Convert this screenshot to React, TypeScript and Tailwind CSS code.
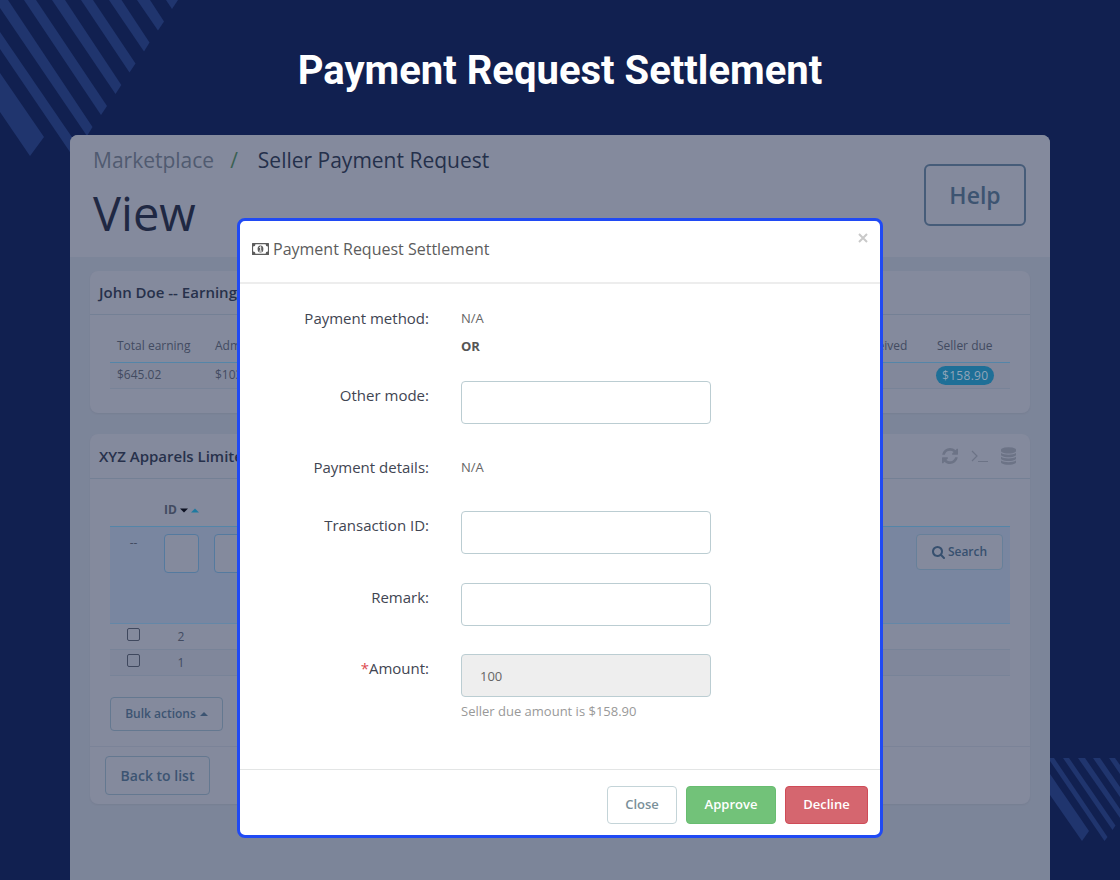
import type { ReactNode } from "react";

interface FormRowProps {
  label: string;
  htmlFor?: string;
  required?: boolean;
  className: string;
  children: ReactNode;
}

const earnings = [
  { label: "Total earning", value: "$645.02", width: "w-[98px]" },
  { label: "Admin commission", value: "$103.20", width: "w-[115px]" },
  { label: "Seller earning", value: "$541.82", width: "" },
  { label: "Seller received", value: "$382.92", width: "w-[109px]" },
];

const requests = [
  { id: 2, row: "" },
  { id: 1, row: "bg-[#80879b]" },
];

function RefreshIcon() {
  return (
    <svg viewBox="0 0 1536 1536" className="h-4 w-4" fill="currentColor" aria-hidden="true">
      <path d="M1511 928q0 5-1 7-64 268-268 434.500t-478 166.500q-146 0-282.500-55t-243.500-157l-129 129q-19 19-45 19t-45-19-19-45v-448q0-26 19-45t45-19h448q26 0 45 19t19 45-19 45l-137 137q71 66 161 102t187 36q134 0 250-65t186-179q11-17 53-117 8-23 30-23h192q13 0 22.500 9.500t9.500 22.500zM1536 128v448q0 26-19 45t-45 19h-448q-26 0-45-19t-19-45 19-45l138-138q-148-137-349-137-134 0-250 65t-186 179q-11 17-53 117-8 23-30 23h-199q-13 0-22.500-9.500t-9.500-22.500v-7q65-268 270-434.500t480-166.500q146 0 284 55.500t245 156.500l130-129q19-19 45-19t45 19 19 45z" />
    </svg>
  );
}

function TerminalIcon() {
  return (
    <svg viewBox="0 0 17 14" className="h-[14px] w-[17px]" fill="none" stroke="currentColor" aria-hidden="true">
      <path d="M1 2l5 5-5 5M7 12.500h10" strokeWidth="1.200" />
    </svg>
  );
}

function DatabaseIcon() {
  return (
    <svg viewBox="0 0 1536 1792" className="h-[18px] w-[15px]" fill="currentColor" aria-hidden="true">
      <path d="M768 768q237 0 443-43t325-127v170q0 69-103 128t-280 93.500-385 34.500-385-34.500-280-93.500-103-128v-170q119 84 325 127t443 43zm0 768q237 0 443-43t325-127v170q0 69-103 128t-280 93.500-385 34.500-385-34.500-280-93.500-103-128v-170q119 84 325 127t443 43zm0-384q237 0 443-43t325-127v170q0 69-103 128t-280 93.500-385 34.500-385-34.500-280-93.500-103-128v-170q119 84 325 127t443 43zm0-1152q208 0 385 34.500t280 93.500 103 128v128q0 69-103 128t-280 93.500-385 34.500-385-34.500-280-93.500-103-128v-128q0-69 103-128t280-93.500 385-34.500z" />
    </svg>
  );
}

function SearchIcon() {
  return (
    <svg viewBox="0 0 1664 1664" className="h-[13px] w-[13px]" fill="currentColor" aria-hidden="true">
      <path d="M1152 704q0-185-131.500-316.500t-316.500-131.500-316.500 131.500-131.500 316.500 131.500 316.500 316.500 131.500 316.500-131.500 131.500-316.500zm512 832q0 52-38 90t-90 38q-54 0-90-38l-343-342q-179 124-399 124-143 0-273.500-55.500t-225-150-150-225-55.500-273.500 55.500-273.500 150-225 225-150 273.500-55.500 273.500 55.500 225 150 150 225 55.500 273.500q0 220-124 399l343 343q37 37 37 90z" />
    </svg>
  );
}

function MoneyIcon() {
  return (
    <svg viewBox="0 0 17 12" className="h-3 w-[17px]" aria-hidden="true">
      <path
        fill="currentColor"
        fillRule="evenodd"
        d="M.6 0h15.800a.6.6 0 0 1 .6.6v10.800a.6.6 0 0 1-.6.600H.6a.6.6 0 0 1-.6-.6V.6A.6.6 0 0 1 .6 0zM3.400 1.200a2.300 2.300 0 0 1-2.300 2.300v5a2.300 2.300 0 0 1 2.300 2.300h10.200a2.300 2.300 0 0 1 2.300-2.300v-5a2.300 2.300 0 0 1-2.300-2.300z"
      />
      <ellipse cx="8.500" cy="6" rx="2.900" ry="3.600" fill="currentColor" />
      <path d="M7.300 4.600l1.400-1v4M7.200 8.100h2.700" fill="none" stroke="#fff" strokeWidth="1" />
    </svg>
  );
}

function Caret({ down = false, className }: { down?: boolean; className?: string }) {
  return (
    <svg viewBox="0 0 8 4" className={className ?? "h-1 w-2"} fill="currentColor" aria-hidden="true">
      <path d={down ? "M0 0h8L4 4z" : "M0 4h8L4 0z"} />
    </svg>
  );
}

function Stripes() {
  return (
    <>
      <svg viewBox="0 0 180 160" className="absolute left-0 top-0 h-40 w-[180px]" fill="#20356e" aria-hidden="true">
        <path d="M0 73L44 137L30 156L0 112z" />
        <path d="M0 32L78 146L72 155L0 49z" />
        <path d="M0 0H8L92.500 127L87 136L0 8z" />
        <path d="M24 0H36L107 106L101 115z" />
        <path d="M52 0H65L121.300 85L115.500 94z" />
        <path d="M81 0H93L135.500 63.500L129.500 72.500z" />
        <path d="M109 0H121.500L149.500 42.500L144 51.500z" />
        <path d="M137 0H150L164 21.500L158 30.500z" />
        <path d="M166 0H178L172 9z" />
      </svg>
      <svg viewBox="0 0 70 90" className="absolute right-0 top-[758px] h-[90px] w-[70px]" fill="#20356e" aria-hidden="true">
        <path d="M0 16L39 73L32 83L0 37z" />
        <path d="M0 0H4L57.500 79L54.500 83L0 3z" />
        <path d="M13 0H19L65.500 67.500L62.500 72z" />
        <path d="M28 0H35L70 51V60z" />
        <path d="M43 0H50L70 29V39z" />
        <path d="M59 0H65L70 7V16z" />
      </svg>
    </>
  );
}

function FormRow({ label, htmlFor, required = false, className, children }: FormRowProps) {
  return (
    <div className={`grid grid-cols-[189px_1fr] gap-x-8 ${className}`}>
      <label htmlFor={htmlFor} className="pt-1 text-right text-[15px] leading-5 text-[#414552]">
        {required && <span className="text-[#dc4a50]">*</span>}
        {label}:
      </label>
      <div className="pt-1 text-[13px] leading-5 text-[#666]">{children}</div>
    </div>
  );
}

function TextField({ id }: { id: string }) {
  return <input id={id} type="text" className="block h-[43px] w-[250px] rounded border border-[#bbcdd2] bg-white px-[18px]" />;
}

function SettlementModal() {
  return (
    <div
      role="dialog"
      aria-labelledby="settlement-title"
      className="absolute inset-x-0 top-[83px] mx-auto w-[646px] rounded-lg border-[3px] border-[#204af4] bg-white"
    >
      <header className="flex h-[63px] items-start justify-between border-b-2 border-[#ededed] pl-3 pr-3">
        <h2 id="settlement-title" className="flex items-center gap-1 pt-4 text-base leading-6 text-[#5c5c5c]">
          <MoneyIcon />
          Payment Request Settlement
        </h2>
        <button type="button" aria-label="Close dialog" className="pt-3 text-[#c9c9c9]">
          <svg viewBox="0 0 10 10" className="h-[10px] w-[10px]" stroke="currentColor" strokeWidth="2" aria-hidden="true">
            <path d="M1 1l8 8M9 1L1 9" />
          </svg>
        </button>
      </header>

      <form>
        <div className="h-[485px] pt-5">
          <FormRow label="Payment method" className="h-[77px]">
            <p>N/A</p>
            <p className="pt-2 font-bold text-[#555]">OR</p>
          </FormRow>
          <FormRow label="Other mode" htmlFor="other-mode" className="h-[72px]">
            <div className="-mt-4 pt-3">
              <TextField id="other-mode" />
            </div>
          </FormRow>
          <FormRow label="Payment details" className="h-[58px]">
            <p>N/A</p>
          </FormRow>
          <FormRow label="Transaction ID" htmlFor="transaction-id" className="h-[72px]">
            <div className="-mt-4 pt-3">
              <TextField id="transaction-id" />
            </div>
          </FormRow>
          <FormRow label="Remark" htmlFor="remark" className="h-[71px]">
            <div className="-mt-4 pt-3">
              <TextField id="remark" />
            </div>
          </FormRow>
          <FormRow label="Amount" htmlFor="amount" required className="h-20">
            <div className="-mt-4 pt-3">
              <input
                id="amount"
                type="text"
                defaultValue="100"
                readOnly
                className="block h-[43px] w-[250px] rounded border border-[#bbcdd2] bg-[#eee] px-[18px]"
              />
              <p className="pt-1 text-[#999]">Seller due amount is $158.90</p>
            </div>
          </FormRow>
        </div>
        <footer className="flex justify-end gap-[9px] border-t border-[#e3e5e5] px-3 pb-[11px] pt-4 text-[13px] font-semibold">
          <button type="button" className="h-[38px] w-[70px] rounded border border-[#c4d4d8] text-[#7a9099]">
            Close
          </button>
          <button type="button" className="h-[38px] w-[90px] rounded border border-[#68bd70] bg-[#72c279] text-white">
            Approve
          </button>
          <button type="button" className="h-[38px] w-[83px] rounded border border-[#cf4b57] bg-[#d5666f] text-white">
            Decline
          </button>
        </footer>
      </form>
    </div>
  );
}

function EarningsCard() {
  return (
    <section className="rounded-lg bg-[#848a9d] pb-6 shadow-xs">
      <h2 className="h-11 border-b border-[#748095] px-[9px] pt-[9px] text-[15px] font-semibold leading-6 text-[#27314b]">
        John Doe -- Earnings
      </h2>
      <div className="px-5">
        <table className="w-full table-fixed text-left text-xs text-[#424b61]">
          <thead>
            <tr className="h-[47px] border-b border-[#5485a8]">
              {earnings.map((item) => (
                <th key={item.label} className={`whitespace-nowrap pl-[7px] pt-4 font-normal ${item.width}`}>
                  {item.label}
                </th>
              ))}
              <th className="w-[82px] pl-[9px] pt-4 font-normal">Seller due</th>
            </tr>
          </thead>
          <tbody>
            <tr className="h-[26px] border-b border-[#788398] bg-[#82889b]">
              {earnings.map((item) => (
                <td key={item.label} className="pl-[7px]">
                  {item.value}
                </td>
              ))}
              <td className="pl-2">
                <span className="inline-block rounded-full bg-[#1e6f97] px-[6px] leading-[19px] tracking-wide text-[#91a5b9]">
                  $158.90
                </span>
              </td>
            </tr>
          </tbody>
        </table>
      </div>
    </section>
  );
}

function RequestsCard() {
  return (
    <section className="rounded-lg bg-[#848a9d] shadow-xs">
      <header className="flex h-[45px] items-center justify-between border-b border-[#748095] pl-[9px] pr-[14px]">
        <h2 className="text-[15px] font-semibold leading-6 text-[#27314b]">XYZ Apparels Limited</h2>
        <div className="flex items-center gap-[13px] text-[#6c7386]">
          <button type="button" aria-label="Refresh list">
            <RefreshIcon />
          </button>
          <button type="button" aria-label="Show SQL query">
            <TerminalIcon />
          </button>
          <button type="button" aria-label="Export to SQL manager">
            <DatabaseIcon />
          </button>
        </div>
      </header>

      <div className="px-5 pb-[15px]">
        <table className="w-full table-fixed text-left text-xs text-[#424b61]">
          <thead>
            <tr className="h-12 border-b border-[#5485a8]">
              <th className="w-[47px]" />
              <th className="w-[50px] pl-[7px] pt-4 font-bold">
                <span className="flex items-center gap-[3px]">
                  ID
                  <Caret down className="h-[5px] w-2 text-[#0c1122]" />
                  <Caret className="h-[5px] w-2 text-[#1e7aa0]" />
                </span>
              </th>
              <th className="w-[500px]" />
              <th />
            </tr>
          </thead>
          <tbody>
            <tr className="h-[97px] border-b border-[#6487a7] bg-[#7986a0] align-top">
              <td className="pt-2 text-center">--</td>
              <td className="pl-[7px] pt-[7px]">
                <input aria-label="Filter by ID" className="block h-[39px] w-[35px] rounded border border-[#547a9f] bg-[#848a9d]" />
              </td>
              <td className="pl-[7px] pt-[7px]">
                <input aria-label="Filter by reference" className="block h-[39px] w-20 rounded border border-[#547a9f] bg-[#848a9d]" />
              </td>
              <td className="pr-[7px] pt-[7px]">
                <button
                  type="button"
                  className="ml-auto flex h-9 w-[87px] items-center justify-center gap-[3px] rounded border border-[#67809a] bg-[#848a9d] font-semibold text-[#37506f]"
                >
                  <SearchIcon />
                  Search
                </button>
              </td>
            </tr>
            {requests.map((request) => (
              <tr key={request.id} className={`h-[26px] border-b border-[#788398] ${request.row}`}>
                <td>
                  <input
                    type="checkbox"
                    aria-label={`Select request ${request.id}`}
                    className="mx-auto mb-1 block h-[13px] w-[13px] appearance-none rounded-xs border border-[#3f485e]"
                  />
                </td>
                <td className="pr-[2px] text-center">{request.id}</td>
                <td />
                <td />
              </tr>
            ))}
          </tbody>
        </table>
        <button
          type="button"
          className="mt-[21px] flex h-[34px] w-[113px] items-center justify-center gap-1 rounded border border-[#647890] text-xs font-semibold text-[#3c5472]"
        >
          Bulk actions
          <Caret />
        </button>
      </div>

      <footer className="border-t border-[#7b8398] px-[15px] pb-[9px] pt-[9px]">
        <button type="button" className="h-[39px] w-[105px] rounded border border-[#647890] text-sm font-semibold text-[#3c5472]">
          Back to list
        </button>
      </footer>
    </section>
  );
}

export default function App() {
  return (
    <div className="relative flex min-h-screen flex-col overflow-hidden bg-[#112050] font-['Open_Sans',sans-serif]">
      <Stripes />
      <h1 className="relative pb-[43px] pt-[49px] text-center font-['Roboto',sans-serif] text-[40px] font-bold leading-[43px] text-white">
        Payment Request Settlement
      </h1>

      <div className="relative mx-[70px] flex-1 rounded-t-lg bg-[#7c8599]">
        <header className="flex h-[122px] justify-between rounded-t-lg bg-[#848a9d] pl-[23px] pr-6">
          <div>
            <nav aria-label="Breadcrumb" className="flex gap-4 pt-[9px] text-[21px] leading-8 text-[#24304b]">
              <a href="#marketplace" className="text-[#505a70]">
                Marketplace
              </a>
              <span className="text-[#3b6153]">/</span>
              <span className="pl-1">Seller Payment Request</span>
            </nav>
            <p className="pt-2 text-[47px] leading-[58px] text-[#1f2843]">View</p>
          </div>
          <button
            type="button"
            className="mt-[29px] h-[62px] w-[102px] rounded-md border-2 border-[#465c79] text-[23px] font-semibold text-[#3d5471]"
          >
            Help
          </button>
        </header>

        <main className="space-y-[21px] px-5 pt-[14px]">
          <EarningsCard />
          <RequestsCard />
        </main>

        <SettlementModal />
      </div>
    </div>
  );
}
